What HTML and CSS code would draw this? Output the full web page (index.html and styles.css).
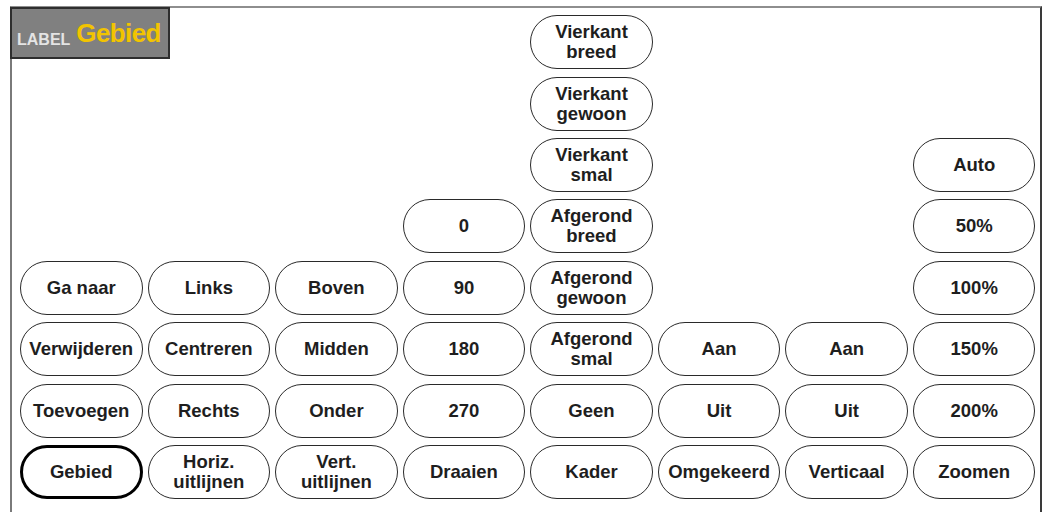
FILE: index.html
```html
<!DOCTYPE html>
<html lang="nl">
<head>
<meta charset="utf-8">
<title>Gebied</title>
<link rel="stylesheet" href="styles.css">
</head>
<body>
<div class="screen">
  <div class="frame">
    <div class="label-box"><span class="label-small">LABEL</span><span class="label-big">Gebied</span></div>
    <div class="columns">
      <div class="col">
        <div class="btn">Ga naar</div>
        <div class="btn">Verwijderen</div>
        <div class="btn">Toevoegen</div>
        <div class="btn selected">Gebied</div>
      </div>
      <div class="col">
        <div class="btn">Links</div>
        <div class="btn">Centreren</div>
        <div class="btn">Rechts</div>
        <div class="btn">Horiz.<br>uitlijnen</div>
      </div>
      <div class="col">
        <div class="btn">Boven</div>
        <div class="btn">Midden</div>
        <div class="btn">Onder</div>
        <div class="btn">Vert.<br>uitlijnen</div>
      </div>
      <div class="col">
        <div class="btn">0</div>
        <div class="btn">90</div>
        <div class="btn">180</div>
        <div class="btn">270</div>
        <div class="btn">Draaien</div>
      </div>
      <div class="col">
        <div class="btn">Vierkant<br>breed</div>
        <div class="btn">Vierkant<br>gewoon</div>
        <div class="btn">Vierkant<br>smal</div>
        <div class="btn">Afgerond<br>breed</div>
        <div class="btn">Afgerond<br>gewoon</div>
        <div class="btn">Afgerond<br>smal</div>
        <div class="btn">Geen</div>
        <div class="btn">Kader</div>
      </div>
      <div class="col">
        <div class="btn">Aan</div>
        <div class="btn">Uit</div>
        <div class="btn">Omgekeerd</div>
      </div>
      <div class="col">
        <div class="btn">Aan</div>
        <div class="btn">Uit</div>
        <div class="btn">Verticaal</div>
      </div>
      <div class="col">
        <div class="btn">Auto</div>
        <div class="btn">50%</div>
        <div class="btn">100%</div>
        <div class="btn">150%</div>
        <div class="btn">200%</div>
        <div class="btn">Zoomen</div>
      </div>
    </div>
  </div>
</div>
</body>
</html>
```
FILE: styles.css
```css
html, body {
  margin: 0;
  padding: 0;
  background: #ffffff;
}

.screen {
  width: 1044px;
  height: 512px;
  padding-top: 6px;
  box-sizing: border-box;
  overflow: hidden;
}

.frame {
  position: relative;
  margin-left: 10px;
  width: 1032px;
  height: 506px;
  box-sizing: border-box;
  border-top: 2px solid #8e8e8e;
  border-left: 2px solid #7a7a7a;
  border-right: 2px solid #3a3a3a;
}

.label-box {
  position: absolute;
  left: -2px;
  top: -1px;
  width: 160px;
  height: 52px;
  box-sizing: border-box;
  background: #808080;
  border: 2px solid #2e2e2e;
  display: flex;
  align-items: baseline;
  padding: 9px 0 0 5px;
  font-family: "Liberation Sans", Arial, sans-serif;
  font-weight: bold;
}

.label-small {
  color: #e4e4e4;
  font-size: 16px;
  margin-right: 6px;
  position: relative;
  top: 3px;
}

.label-big {
  color: #f2c400;
  font-size: 26px;
  letter-spacing: -0.6px;
}

.columns {
  display: flex;
  gap: 5.07px;
  margin-left: 8px;
  height: 492px;
  padding-top: 7px;
  box-sizing: border-box;
}

.col {
  width: 122.5px;
  display: flex;
  flex-direction: column;
  justify-content: flex-end;
  gap: 7.4px;
  height: 484px;
}

.btn {
  height: 54px;
  flex: 0 0 54px;
  box-sizing: border-box;
  border: 1.5px solid #2a2a2a;
  border-radius: 27px;
  display: flex;
  align-items: center;
  justify-content: center;
  text-align: center;
  font-family: "Liberation Sans", Arial, sans-serif;
  font-weight: bold;
  font-size: 18.5px;
  line-height: 20px;
  color: #1e1e1e;
}

.btn.selected {
  border: 3px solid #000000;
}
```
